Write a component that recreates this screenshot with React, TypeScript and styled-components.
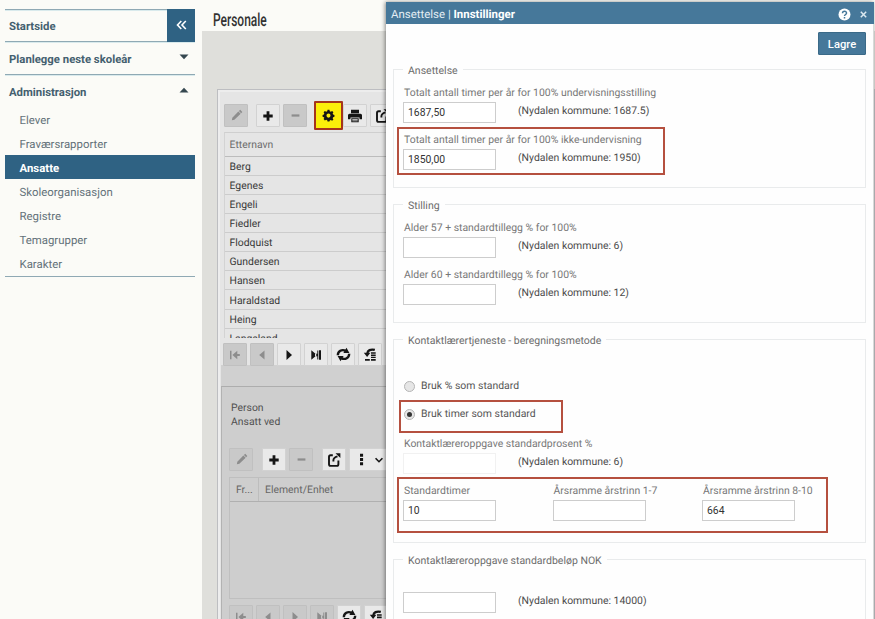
import React from 'react';
import styled, { createGlobalStyle, css } from 'styled-components';

const GlobalStyle = createGlobalStyle`
  * { box-sizing: border-box; }
  html, body { margin: 0; padding: 0; }
  body {
    background: #fbfbf7;
    font-family: Roboto, "Liberation Sans", sans-serif;
    font-size: 10.4px;
    color: #444;
    overflow: hidden;
    text-rendering: geometricPrecision;
  }
`;

const Page = styled.div`
  position: relative;
  display: flex;
  width: 875px;
  height: 619px;
  overflow: hidden;
`;

/* ---------- Sidebar ---------- */

const Sidebar = styled.nav`
  flex: none;
  width: 202px;
  padding: 9px 7px 0 5px;
`;

const MenuHead = styled.div<{ $height: number }>`
  display: flex;
  align-items: center;
  justify-content: space-between;
  height: ${(p) => p.$height}px;
  padding: 1px 0 0 4px;
  border-top: 1px solid #8fa9b4;
  box-shadow: inset 0 1px 0 #d9eaec;
  color: #44606f;
  font-size: 11.35px;
  font-weight: 700;
`;

const Collapse = styled.button`
  display: grid;
  place-items: center;
  width: 28px;
  height: 33px;
  margin-top: -2px;
  padding: 0;
  border: 0;
  background: #2f6283;
`;

const Caret = styled.svg`
  width: 10px;
  height: 6px;
  margin: -4px 6px 0 0;
  fill: #35474f;
`;

const SubMenu = styled.ul`
  margin: 0;
  padding: 0;
  list-style: none;
  border-bottom: 1px solid #8fa9b4;
`;

const SubItem = styled.li<{ $active?: boolean }>`
  display: flex;
  align-items: center;
  height: 24.1px;
  padding: 1px 0 0 14.5px;
  font-size: 11.4px;
  color: ${(p) => (p.$active ? '#fff' : '#64727a')};
  font-weight: ${(p) => (p.$active ? 700 : 400)};
  background: ${(p) => (p.$active ? '#2f6283' : 'transparent')};
`;

/* ---------- Main ---------- */

const Main = styled.main`
  flex: 1;
  display: flex;
  flex-direction: column;
`;

const PageTitle = styled.h1`
  flex: none;
  height: 31px;
  margin: 0 0 0 11px;
  padding-top: 11px;
  font-size: 18px;
  line-height: 20px;
  font-weight: 500;
  color: #333;
  transform: scaleX(0.665);
  transform-origin: left;
`;

const Canvas = styled.div`
  flex: 1;
  padding: 58px 0 0 15px;
  background: #dfdfdb;
`;

const ListPanel = styled.section`
  height: 540px;
  padding: 0 0 0 4px;
  border: 1px solid #bdbec1;
  box-shadow: inset 2px 2px 0 #ededed;
  background: #e5e5e5;
`;

const Toolbar = styled.div<{ $top: number; $left: number; $height?: number }>`
  display: flex;
  height: ${(p) => p.$height ?? 22}px;
  margin: ${(p) => p.$top}px 0 0 ${(p) => p.$left}px;
`;

const ToolButton = styled.button<{ $gap?: number; $disabled?: boolean; $marked?: boolean; $w?: number }>`
  display: flex;
  align-items: center;
  justify-content: center;
  gap: 5px;
  flex: none;
  width: ${(p) => p.$w ?? 24}px;
  height: 23px;
  margin: 0 0 0 ${(p) => p.$gap ?? 3}px;
  padding: 0;
  border: 1px solid ${(p) => (p.$disabled ? '#c0c0c0' : '#d2d2d2')};
  border-radius: 1px;
  color: ${(p) => (p.$disabled ? '#8d8d8d' : '#151515')};
  background: ${(p) => (p.$disabled ? '#c9c9c9' : '#e9e9e9')};
  ${(p) =>
    p.$marked &&
    css`
      width: 29px;
      height: 29px;
      margin-top: -3px;
      border: 2px solid #a5341c;
      background: #fbee0a;
    `}
`;

const NameTable = styled.div`
  height: 206px;
  margin: 6px 0 0 2px;
  overflow: hidden;
  border-left: 1px solid #d3d3d3;
  border-top: 1px solid #cfcfcf;
`;

const NameRow = styled.div<{ $head?: boolean }>`
  display: flex;
  align-items: center;
  height: ${(p) => (p.$head ? 23.5 : 19.15)}px;
  padding: 1px 0 0 4.5px;
  border-bottom: 1px solid ${(p) => (p.$head ? '#bcbcbc' : '#cccccc')};
  color: ${(p) => (p.$head ? '#6b6b6b' : '#383838')};
  font-size: 10.4px;
`;

const DetailArea = styled.div`
  height: 260px;
  padding-top: 21px;
  margin-left: -1px;
  background: #d0d0d0;
`;

const DetailPanel = styled.section`
  height: 240px;
  padding: 14px 0 0 7px;
  border-top: 1px solid #adadad;
  border-left: 1px solid #b2b2b2;
  background: #cecece;
`;

const PersonInfo = styled.div`
  height: 30px;
  padding-left: 2px;
  font-size: 10.4px;
  line-height: 14px;
  color: #505050;
`;

const DetailGrid = styled.div`
  height: 122px;
  margin: 5px 0 0 0;
  border: 1px solid #bfbfbf;
`;

const DetailHead = styled.div`
  display: grid;
  grid-template-columns: 29px 1fr;
  height: 24px;
  align-items: stretch;
  border-bottom: 1px solid #b0b0b0;
  color: #666;
`;

const HeadCell = styled.div<{ $first?: boolean }>`
  display: flex;
  align-items: center;
  padding-left: 6px;
  font-size: 10.4px;
  border-right: ${(p) => (p.$first ? '1px solid #bdbdbd' : '0')};
`;

/* ---------- Dialog ---------- */

const Dialog = styled.section`
  position: absolute;
  left: 386px;
  top: 2px;
  width: 488px;
  height: 630px;
  background: #fefefe;
  border-right: 1px solid #d9d9d9;
  box-shadow: -1px 0 4px rgba(0, 0, 0, 0.45);
`;

const DialogHeader = styled.header`
  display: flex;
  align-items: center;
  height: 22px;
  padding: 2px 7px 0 5px;
  margin-right: -1px;
  background: #46789a;
  color: #e4eef4;
  font-size: 11.45px;
  b { color: #fff; }
`;

const HeaderIcons = styled.div`
  display: flex;
  align-items: center;
  gap: 9px;
  margin-left: auto;
`;

const Actions = styled.div`
  display: flex;
  justify-content: flex-end;
  height: 45px;
  padding: 8px 7px 0 0;
`;

const SaveButton = styled.button`
  width: 48px;
  height: 23px;
  padding: 1px 0 0;
  border: 1px solid #3b6a88;
  border-radius: 1px;
  background: #46789a;
  color: #fff;
  font: 500 11.2px Roboto, sans-serif;
`;

const Group = styled.div<{ $height: number }>`
  height: ${(p) => p.$height}px;
  margin: 0 7px 16px 7px;
  padding: 0 0 0 10px;
  border: 1px solid #e9ebec;
`;

const Legend = styled.div<{ $after: number }>`
  width: max-content;
  height: 14px;
  margin: -7px 0 ${(p) => p.$after}px -1px;
  padding: 0 5px;
  background: #fefefe;
  line-height: 15px;
  font-size: 10.5px;
  color: #6c6c6c;
`;

const Field = styled.div<{ $height?: number }>`
  position: relative;
  height: ${(p) => p.$height ?? 46.5}px;
`;

const Label = styled.label`
  display: block;
  height: 16px;
  line-height: 14px;
  font-size: 10.43px;
  color: #777;
  white-space: nowrap;
`;

const InputLine = styled.div`
  display: flex;
`;

const TextBox = styled.input<{ $faint?: boolean }>`
  width: 93px;
  height: 21px;
  margin-left: -1px;
  padding: 0 0 0 4px;
  border: 1px solid ${(p) => (p.$faint ? '#f1f1f1' : '#cdcdcd')};
  background: #fff;
  font: 10.4px Roboto, sans-serif;
  color: #333;
  outline: 0;
`;

const Note = styled.span`
  margin-left: 22px;
  line-height: 17px;
  font-size: 10.45px;
  color: #4b4b4b;
  white-space: nowrap;
`;

const Highlight = styled.div<{ $x: number; $y: number; $w: number; $h: number }>`
  position: absolute;
  left: ${(p) => p.$x}px;
  top: ${(p) => p.$y}px;
  width: ${(p) => p.$w}px;
  height: ${(p) => p.$h}px;
  border: 2px solid #b5503f;
  pointer-events: none;
`;

const RadioRow = styled.div<{ $height: number }>`
  position: relative;
  display: flex;
  align-items: flex-start;
  gap: 6px;
  height: ${(p) => p.$height}px;
  line-height: 14px;
  font-size: 10.45px;
  color: #555;
`;

const RadioDot = styled.span<{ $checked?: boolean }>`
  display: grid;
  place-items: center;
  width: 11px;
  height: 11px;
  margin: 2px 0 0 0;
  border: 1px solid #b5b5b5;
  border-radius: 50%;
  background: #e6e6e6;
  &::after {
    content: '';
    width: 5px;
    height: 5px;
    border-radius: 50%;
    background: ${(p) => (p.$checked ? '#333' : 'transparent')};
  }
`;

const Columns = styled.div`
  position: relative;
  display: grid;
  grid-template-columns: 149.5px 149.5px 149.5px;
`;

/* ---------- Icons ---------- */

type IconName =
  | 'pencil' | 'plus' | 'minus' | 'gear' | 'print' | 'export' | 'dots' | 'chevron'
  | 'first' | 'prev' | 'next' | 'last' | 'refresh' | 'undo';

const shapes: Record<IconName, React.ReactNode> = {
  pencil: <path d="M2 12l.5-2.500L9 2.700l2.500 2.500L4.700 11.600zM9.600 2.200L11 .9l2.300 2.300-1.300 1.400z" />,
  plus: <path d="M5.600 2.300h2.800v3.300h3.300v2.800H8.400v3.300H5.600V8.400H2.300V5.600h3.300z" />,
  minus: <path d="M2.800 5.800h8.400v2.400H2.800z" />,
  gear: (
    <path
      fillRule="evenodd"
      d="M6 .9h2l.4 1.500 1.100.5 1.400-.8 1.400 1.400-.8 1.400.5 1.100 1.400.4v2l-1.400.4-.5 1.100.8 1.400-1.400 1.400-1.400-.8-1.100.5L8 13.500H6l-.4-1.500-1.100-.5-1.400.8-1.400-1.400.8-1.400L2 8.800.6 8.400v-2L2 6l.5-1.100-.8-1.400 1.400-1.400 1.400.8 1.100-.5zM7 4.900a2.200 2.200 0 1 0 0 4.400 2.200 2.200 0 0 0 0-4.400z"
    />
  ),
  print: (
    <path
      fillRule="evenodd"
      d="M3 .8h8v3.400H3zM1.500 4.800h11q1.500 0 1.500 1.500v4h-2.500V8.500h-9v1.800H0v-4q0-1.500 1.500-1.500zM3.300 9.300h7.400v3.900H3.300zm1 .9v.7h5.400v-.7zm0 1.400v.7h5.400v-.7z"
    />
  ),
  export: (
    <g fill="none" stroke="currentColor" strokeWidth="1.900">
      <path d="M5.800 2.300H3.600Q2 2.300 2 3.900v7.400q0 1.600 1.600 1.600h6.200q1.600 0 1.600-1.600V7.600" />
      <path d="M6.400 8.600V7.200Q6.400 4.600 10.500 3.300" />
      <path d="M8.500.2h4.900v4.900z" fill="currentColor" stroke="none" />
    </g>
  ),
  dots: <path d="M5.400.7h3.300v3.300H5.400zM5.400 5.300h3.300v3.300H5.400zM5.400 9.900h3.300v3.300H5.400z" />,
  chevron: <path d="M3 5l4 4 4-4" fill="none" stroke="currentColor" strokeWidth="1.900" />,
  first: <path d="M2 2.700h1.500v8.600H2zM9.300 2.700v8.600L4.400 7zM9 6.100h2.800v1.800H9z" />,
  prev: <path d="M9.500 2.500v9L4.200 7z" />,
  next: <path d="M4.500 2.100v9.800L10 7z" />,
  last: <path d="M2.300 2.200v9.600L7.400 7.600V6.400zM6 5.800h3v2.400H6zM8.300 2.400h1v9.200h-1zM10 2.200h2v9.600h-2z" />,
  refresh: (
    <g fill="none" stroke="currentColor" strokeWidth="2.200">
      <path d="M1.700 7.800C1.700 4.200 5.400 1.600 9 3.600" />
      <path d="M12.300 6.200C12.300 9.800 8.600 12.400 5 10.400" />
      <path d="M9.800 .8L12.500 5.600H6.900zM4.200 13.200L1.500 8.400h5.600z" fill="currentColor" stroke="none" />
    </g>
  ),
  undo: (
    <g>
      <path d="M11.800 1.900C7.500.8 4.500 2.400 4.300 5.500" fill="none" stroke="currentColor" strokeWidth="2.300" />
      <path d="M.8 4.700h6.600L4.100 9zM8 4.300h4.700v1.400H8zM8 6.500h4.700v1.400H8zM8 8.700h4.700v1.400H8zM2 10.900h4.800v1.900H2zM8 10.900h4.700v1.900H8z" />
    </g>
  ),
};

const Glyph = styled.svg<{ $size: number }>`
  flex: none;
  width: ${(p) => p.$size}px;
  height: ${(p) => p.$size}px;
  fill: currentColor;
`;

const Icon = ({ name, size = 14 }: { name: IconName; size?: number }) => (
  <Glyph $size={size} viewBox="0 0 14 14">{shapes[name]}</Glyph>
);

const CaretIcon = ({ up }: { up?: boolean }) => (
  <Caret viewBox="0 0 10 6"><path d={up ? 'M.5 5.500L5 .8l4.500 4.700z' : 'M.5 .5h9L5 5.200z'} /></Caret>
);

/* ---------- Data ---------- */

const menuItems = ['Elever', 'Fraværsrapporter', 'Ansatte', 'Skoleorganisasjon', 'Registre', 'Temagrupper', 'Karakter'];
const names = ['Berg', 'Egenes', 'Engeli', 'Fiedler', 'Flodquist', 'Gundersen', 'Hansen', 'Haraldstad', 'Heing', 'Langeland'];

const Pager = ({ top, left, atEnd }: { top: number; left: number; atEnd?: boolean }) => (
  <Toolbar $top={top} $left={left}>
    <ToolButton $gap={0} $disabled><Icon name="first" /></ToolButton>
    <ToolButton $disabled><Icon name="prev" /></ToolButton>
    <ToolButton $disabled={atEnd}><Icon name="next" /></ToolButton>
    <ToolButton $disabled={atEnd}><Icon name="last" /></ToolButton>
    <ToolButton><Icon name="refresh" size={15} /></ToolButton>
    <ToolButton><Icon name="undo" size={14} /></ToolButton>
  </Toolbar>
);

interface SettingProps {
  label: string;
  value?: string;
  note?: string;
  height?: number;
  faint?: boolean;
  children?: React.ReactNode;
}

const Setting = ({ label, value = '', note, height, faint, children }: SettingProps) => (
  <Field $height={height}>
    <Label>{label}</Label>
    <InputLine>
      <TextBox readOnly value={value} $faint={faint} />
      {note && <Note>{note}</Note>}
    </InputLine>
    {children}
  </Field>
);

export default function App() {
  return (
    <>
      <GlobalStyle />
      <Page>
        <Sidebar>
          <MenuHead $height={32}>
            Startside
            <Collapse>
              <svg width="11" height="10" viewBox="0 0 11 10" fill="none" stroke="#fff" strokeWidth="1.600">
                <path d="M5.300 1L1.500 5l3.800 4M9.800 1L6 5l3.800 4" />
              </svg>
            </Collapse>
          </MenuHead>
          <MenuHead $height={33}>Planlegge neste skoleår<CaretIcon /></MenuHead>
          <MenuHead $height={33}>Administrasjon<CaretIcon up /></MenuHead>
          <SubMenu>
            {menuItems.map((item) => (
              <SubItem key={item} $active={item === 'Ansatte'}>{item}</SubItem>
            ))}
          </SubMenu>
        </Sidebar>

        <Main>
          <PageTitle>Personale</PageTitle>
          <Canvas>
            <ListPanel>
              <Toolbar $top={14} $left={2}>
                <ToolButton $gap={0} $disabled><Icon name="pencil" size={13} /></ToolButton>
                <ToolButton $gap={8}><Icon name="plus" /></ToolButton>
                <ToolButton $disabled><Icon name="minus" size={13} /></ToolButton>
                <ToolButton $gap={7} $marked><Icon name="gear" size={13} /></ToolButton>
                <ToolButton $gap={0}><Icon name="print" size={14} /></ToolButton>
                <ToolButton $gap={3}><Icon name="export" size={14} /></ToolButton>
              </Toolbar>
              <NameTable>
                <NameRow $head>Etternavn</NameRow>
                {names.map((name) => <NameRow key={name}>{name}</NameRow>)}
              </NameTable>
              <Pager top={5} left={1} />
              <DetailArea>
                <DetailPanel>
                  <PersonInfo>
                    <div>Person</div>
                    <div>Ansatt ved</div>
                  </PersonInfo>
                  <Toolbar $top={17} $left={0} $height={24}>
                    <ToolButton $gap={0} $disabled><Icon name="pencil" size={13} /></ToolButton>
                    <ToolButton $gap={9}><Icon name="plus" /></ToolButton>
                    <ToolButton $disabled><Icon name="minus" size={13} /></ToolButton>
                    <ToolButton $gap={9}><Icon name="export" size={14} /></ToolButton>
                    <ToolButton $w={42}><Icon name="dots" size={13} /><Icon name="chevron" size={12} /></ToolButton>
                  </Toolbar>
                  <DetailGrid>
                    <DetailHead>
                      <HeadCell $first>Fr...</HeadCell>
                      <HeadCell>Element/Enhet</HeadCell>
                    </DetailHead>
                  </DetailGrid>
                  <Pager top={6} left={0} atEnd />
                </DetailPanel>
              </DetailArea>
            </ListPanel>
          </Canvas>
        </Main>

        <Dialog>
          <DialogHeader>
            <span>Ansettelse | <b>Innstillinger</b></span>
            <HeaderIcons>
              <svg width="13" height="13" viewBox="0 0 13 13">
                <circle cx="6.500" cy="6.500" r="6" fill="#fff" />
                <path d="M4.500 5.200c0-2.800 4.200-2.500 4 0C8.400 6.500 6.600 6.500 6.500 8M6.500 9v1.500" fill="none" stroke="#46789a" strokeWidth="1.500" />
              </svg>
              <svg width="7" height="7" viewBox="0 0 7 7">
                <path d="M.8 .8l5.400 5.400M6.200 .8L.8 6.200" stroke="#dce9f0" strokeWidth="1.500" />
              </svg>
            </HeaderIcons>
          </DialogHeader>
          <Actions><SaveButton>Lagre</SaveButton></Actions>

          <Group $height={119}>
            <Legend $after={9}>Ansettelse</Legend>
            <Setting label="Totalt antall timer per år for 100% undervisningsstilling" value="1687,50" note="(Nydalen kommune: 1687.5)" />
            <Setting label="Totalt antall timer per år for 100% ikke-undervisning" value="1850,00" note="(Nydalen kommune: 1950)">
              <Highlight $x={-7} $y={-6} $w={268} $h={48} />
            </Setting>
          </Group>

          <Group $height={119}>
            <Legend $after={9}>Stilling</Legend>
            <Setting label="Alder 57 + standardtillegg % for 100%" note="(Nydalen kommune: 6)" />
            <Setting label="Alder 60 + standardtillegg % for 100%" note="(Nydalen kommune: 12)" />
          </Group>

          <Group $height={204}>
            <Legend $after={32}>Kontaktlærertjeneste - beregningsmetode</Legend>
            <RadioRow $height={28}><RadioDot />Bruk % som standard</RadioRow>
            <RadioRow $height={30}>
              <RadioDot $checked />Bruk timer som standard
              <Highlight $x={-5} $y={-7} $w={164} $h={33} />
            </RadioRow>
            <Setting label="Kontaktlæreroppgave standardprosent %" note="(Nydalen kommune: 6)" height={47} faint />
            <Columns>
              <Setting label="Standardtimer" value="10" />
              <Setting label="Årsramme årstrinn 1-7" />
              <Setting label="Årsramme årstrinn 8-10" value="664" />
              <Highlight $x={-7} $y={-7} $w={431} $h={56} />
            </Columns>
          </Group>

          <Group $height={119}>
            <Legend $after={9}>Kontaktlæreroppgave standardbeløp NOK</Legend>
            <Setting label="" note="(Nydalen kommune: 14000)" />
          </Group>
        </Dialog>
      </Page>
    </>
  );
}
